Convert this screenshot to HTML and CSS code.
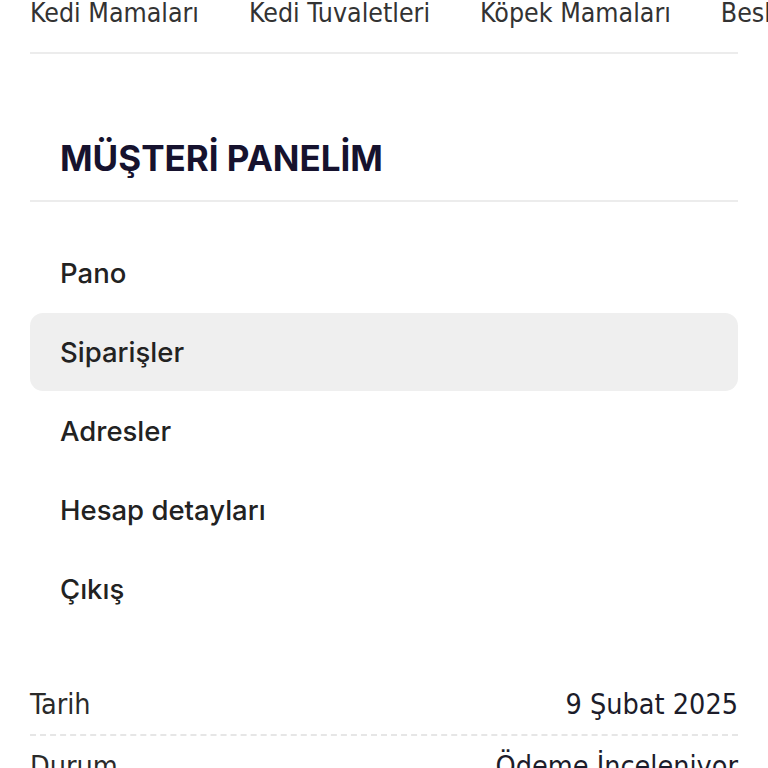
FILE: index.html
```html
<!DOCTYPE html>
<html lang="tr">
<head>
<meta charset="utf-8">
<link rel="stylesheet" href="styles.css">
</head>
<body>
<div class="page">
  <nav class="cats">
    <span class="cat">Kedi Mamaları</span>
    <span class="cat">Kedi Tuvaletleri</span>
    <span class="cat">Köpek Mamaları</span>
    <span class="cat">Beslenme Ürünleri</span>
  </nav>
  <h1 class="title">MÜŞTERİ PANELİM</h1>
  <ul class="menu">
    <li class="item">Pano</li>
    <li class="item active">Siparişler</li>
    <li class="item">Adresler</li>
    <li class="item">Hesap detayları</li>
    <li class="item">Çıkış</li>
  </ul>
  <div class="details">
    <div class="row"><span class="label">Tarih</span><span class="value">9 Şubat 2025</span></div>
    <div class="row"><span class="label">Durum</span><span class="value">Ödeme İnceleniyor</span></div>
  </div>
</div>
</body>
</html>
```
FILE: styles.css
```css
html, body {
  margin: 0;
  padding: 0;
  background: #ffffff;
  overflow: hidden;
}
.page {
  width: 708px;
  margin: 0 30px;
}
.cats {
  display: flex;
  gap: 50px;
  white-space: nowrap;
  overflow: hidden;
  margin-top: -8px;
  margin-right: -30px;
  height: 60px;
  font-family: "Liberation Sans Narrow", "DejaVu Sans Condensed", sans-serif;
  font-size: 26.5px;
  color: #333333;
  line-height: 42px;
}
.title {
  margin: 0;
  padding: 84px 30px 22px;
  line-height: 40px;
  border-top: 2px solid #ececec;
  border-bottom: 2px solid #ececec;
  font-family: Inter, "Noto Sans", sans-serif;
  font-weight: 700;
  font-size: 35px;
  color: #16122e;
}
.menu {
  list-style: none;
  margin: 32px 0 0;
  padding: 0;
  display: flex;
  flex-direction: column;
  gap: 1px;
}
.item {
  height: 78px;
  padding: 0 30px;
  display: flex;
  align-items: center;
  border-radius: 13px;
  font-family: Inter, "Noto Sans", sans-serif;
  font-weight: 500;
  font-size: 27.5px;
  color: #222222;
}
.item.active {
  background: #efefef;
}
.details {
  margin-top: 46px;
  font-family: "Liberation Sans Narrow", "DejaVu Sans Condensed", sans-serif;
  font-size: 28.5px;
  color: #2a2a2a;
}
.row {
  display: flex;
  justify-content: space-between;
  align-items: center;
  height: 60px;
  border-bottom: 2px dashed #e6e6e6;
}
.value {
  color: #1c1c2a;
}
```
